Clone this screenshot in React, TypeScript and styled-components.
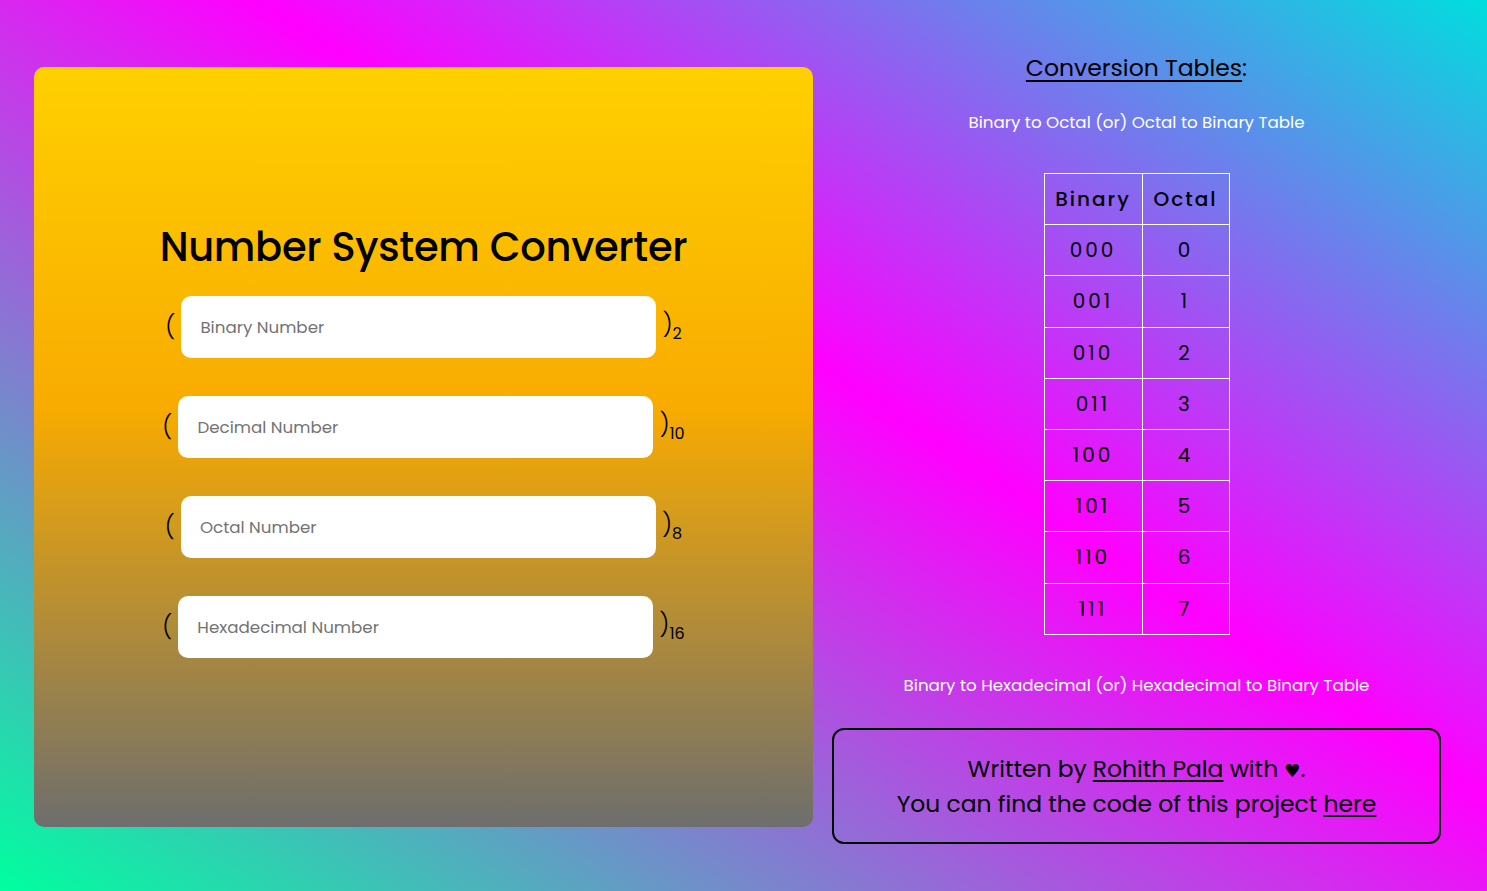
import React from "react";
import styled, { createGlobalStyle } from "styled-components";

const GlobalStyle = createGlobalStyle`
  html, body {
    margin: 0;
    padding: 0;
  }
  body {
    min-height: 100vh;
    font-family: Poppins, Inter, "Open Sans", sans-serif;
    background: linear-gradient(33deg, #00ff9f 0%, #ff00ff 57%, #00dede 100%);
    background-attachment: fixed;
  }
`;

const Page = styled.div`
  display: flex;
  align-items: flex-start;
  gap: 19px;
  padding: 0 46px 0 34px;
  height: 891px;
  box-sizing: border-box;
`;

const Card = styled.div`
  flex: 0 0 779px;
  height: 760px;
  margin-top: 67px;
  border-radius: 10px;
  background: linear-gradient(180deg, #ffd000 0%, #f8ab00 45%, #6e6e6e 100%);
  display: flex;
  flex-direction: column;
  align-items: center;
  padding-top: 152px;
  box-sizing: border-box;
`;

const Title = styled.h1`
  margin: 0 0 21px;
  font-size: 40px;
  font-weight: 500;
  line-height: 56px;
  color: #000;
  letter-spacing: -0.3px;
`;

const Field = styled.div`
  display: flex;
  align-items: center;
  justify-content: center;
  gap: 6px;
  margin-bottom: 38px;
  color: #000;
`;

const Paren = styled.span`
  font-size: 24px;
  font-weight: 300;
  line-height: 1;
`;

const Base = styled.sub`
  font-size: 16px;
  font-weight: 400;
  vertical-align: -6px;
`;

const Input = styled.input`
  width: 475px;
  height: 62px;
  box-sizing: border-box;
  border: none;
  border-radius: 10px;
  background: #fff;
  padding: 0 19px;
  font-family: inherit;
  font-size: 16.7px;
  outline: none;
  &::placeholder {
    color: #737373;
  }
`;

const Side = styled.div`
  flex: 0 0 609px;
  display: flex;
  flex-direction: column;
  align-items: center;
`;

const SideTitle = styled.h2`
  margin: 50px 0 0;
  font-size: 23.5px;
  font-weight: 400;
  line-height: 36px;
  color: #000;
  u {
    text-underline-offset: 4px;
    text-decoration-thickness: 2px;
  }
`;

const Caption = styled.p<{ $top: number }>`
  margin: ${(p) => p.$top}px 0 0;
  font-size: 16.7px;
  line-height: 24px;
  color: #fff;
`;

const Table = styled.table`
  margin-top: 39px;
  border-collapse: collapse;
  color: #000;
  th, td {
    border: 1px solid #fff;
    text-align: center;
    height: 50.2px;
    font-size: 20px;
    padding: 0;
  }
  th {
    font-weight: 500;
    letter-spacing: 2px;
  }
  td {
    font-weight: 400;
    letter-spacing: 3px;
  }
  th:first-child, td:first-child {
    width: 97px;
  }
  th:last-child, td:last-child {
    width: 86px;
  }
`;

const Credit = styled.div`
  margin-top: 31px;
  width: 609px;
  height: 116px;
  box-sizing: border-box;
  border: 2px solid #000;
  border-radius: 12px;
  display: flex;
  flex-direction: column;
  align-items: center;
  justify-content: center;
  font-size: 23.4px;
  line-height: 35px;
  color: #000;
  a {
    color: #000;
    text-underline-offset: 3px;
  }
`;

const Heart = styled.span`
  font-family: "DejaVu Sans", sans-serif;
  font-size: 18px;
  line-height: 1;
`;

const fields = [
  { name: "Binary Number", base: "2" },
  { name: "Decimal Number", base: "10" },
  { name: "Octal Number", base: "8" },
  { name: "Hexadecimal Number", base: "16" },
];

const octal = ["000", "001", "010", "011", "100", "101", "110", "111"];

export default function App() {
  return (
    <>
      <GlobalStyle />
      <Page>
        <Card>
          <Title>Number System Converter</Title>
          {fields.map((f) => (
            <Field key={f.name}>
              <Paren>(</Paren>
              <Input placeholder={f.name} />
              <Paren>
                )<Base>{f.base}</Base>
              </Paren>
            </Field>
          ))}
        </Card>
        <Side>
          <SideTitle>
            <u>Conversion Tables</u>:
          </SideTitle>
          <Caption $top={24}>Binary to Octal (or) Octal to Binary Table</Caption>
          <Table>
            <thead>
              <tr>
                <th>Binary</th>
                <th>Octal</th>
              </tr>
            </thead>
            <tbody>
              {octal.map((b, i) => (
                <tr key={b}>
                  <td>{b}</td>
                  <td>{i}</td>
                </tr>
              ))}
            </tbody>
          </Table>
          <Caption $top={38}>Binary to Hexadecimal (or) Hexadecimal to Binary Table</Caption>
          <Credit>
            <span>
              Written by <a href="#">Rohith Pala</a> with <Heart>♥</Heart>.
            </span>
            <span>
              You can find the code of this project <a href="#">here</a>
            </span>
          </Credit>
        </Side>
      </Page>
    </>
  );
}
